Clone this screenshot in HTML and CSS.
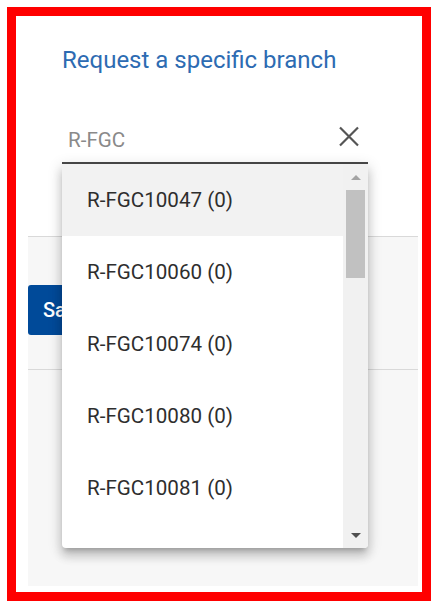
FILE: index.html
```html
<!DOCTYPE html>
<html>
<head>
<meta charset="utf-8">
<link rel="stylesheet" href="styles.css">
</head>
<body>
<div class="frame">
  <div class="dialog">
    <div class="head">
      <h2 class="title">Request a specific branch</h2>
      <div class="field">
        <div class="input-row">
          <span class="input-text">R-FGC</span>
          <svg class="clear" width="22" height="22" viewBox="0 0 22 22"><path d="M2 1.5 L20 19.5 M20 1.5 L2 19.5" stroke="#555" stroke-width="2.2" fill="none"/></svg>
        </div>
        <div class="panel">
          <ul class="options">
            <li class="opt active">R-FGC10047 (0)</li>
            <li class="opt">R-FGC10060 (0)</li>
            <li class="opt">R-FGC10074 (0)</li>
            <li class="opt">R-FGC10080 (0)</li>
            <li class="opt">R-FGC10081 (0)</li>
          </ul>
          <div class="scrollbar">
            <div class="sb-btn"><span class="arrow up"></span></div>
            <div class="thumb"></div>
            <div class="track"></div>
            <div class="sb-btn"><span class="arrow down"></span></div>
          </div>
        </div>
      </div>
    </div>
    <div class="footer">
      <div class="actions">
        <button class="save">Save</button>
      </div>
      <div class="rest"></div>
    </div>
  </div>
</div>
</body>
</html>
```

FILE: styles.css
```css
* { box-sizing: border-box; }
html, body { margin: 0; padding: 0; background: #fff; }
body { font-family: Roboto, "Noto Sans", sans-serif; }

.frame {
  margin: 7px;
  width: 424px;
  height: 594px;
  border: 9px solid #ff0000;
  background: #fff;
}
.dialog {
  height: 100%;
  display: flex;
  flex-direction: column;
}
.head {
  padding: 30px 0 0 46px;
  height: 220px;
  flex: none;
}
.title {
  margin: 0;
  font-size: 24px;
  line-height: 28px;
  font-weight: 400;
  color: #2d6bb2;
}
.field {
  position: relative;
  width: 306px;
  margin-top: 54px;
}
.input-row {
  display: flex;
  align-items: flex-start;
  justify-content: space-between;
  padding: 0 8px 10px 6px;
  border-bottom: 2px solid #4a4a4a;
}
.input-text {
  font-size: 20.6px;
  line-height: 24px;
  color: #8a8a8a;
}
.clear { margin-top: -2px; }

.panel {
  position: absolute;
  left: 0;
  top: 36px;
  width: 306px;
  height: 384px;
  background: #fff;
  display: flex;
  border-radius: 0 0 4px 4px;
  overflow: hidden;
  box-shadow: 0 5px 5px -3px rgba(0,0,0,.2), 0 8px 10px 1px rgba(0,0,0,.14), 0 3px 14px 2px rgba(0,0,0,.12);
  z-index: 2;
}
.options {
  list-style: none;
  margin: 0;
  padding: 0;
  flex: 1;
  overflow: hidden;
}
.opt {
  height: 72px;
  padding: 24px 0 0 25px;
  font-size: 20.6px;
  line-height: 24px;
  color: #2e2e2e;
}
.opt.active { background: #f2f2f2; }

.scrollbar {
  width: 25px;
  flex: none;
  background: #f1f1f1;
  display: flex;
  flex-direction: column;
}
.sb-btn {
  height: 25px;
  display: flex;
  align-items: center;
  justify-content: center;
}
.arrow {
  width: 0;
  height: 0;
  border-left: 5.5px solid transparent;
  border-right: 5.5px solid transparent;
}
.arrow.up { border-bottom: 5.5px solid #a3a3a3; margin-top: 2px; }
.arrow.down { border-top: 5.5px solid #505050; margin-top: 0; }
.thumb {
  height: 88px;
  margin: 1px 3px 0;
  background: #c1c1c1;
}
.track { flex: 1; }

.footer {
  flex: 1;
  margin: 0 4px 6px 12px;
  background: #f7f7f7;
  border-top: 1px solid #d9d9d9;
  display: flex;
  flex-direction: column;
}
.actions {
  height: 133px;
  padding-top: 48px;
  border-bottom: 1px solid #d9d9d9;
}
.save {
  height: 50px;
  padding: 0 15px;
  border: none;
  border-radius: 3px;
  background: #004a99;
  color: #fff;
  font-family: Roboto, sans-serif;
  font-size: 20px;
  font-weight: 500;
}
.rest { flex: 1; }
```
